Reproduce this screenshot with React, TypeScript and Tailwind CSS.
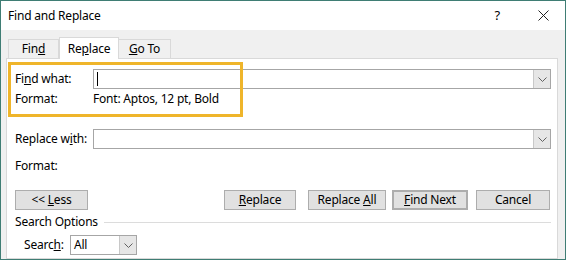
import React from 'react'

const font = { fontFamily: '"Noto Sans", "Open Sans", sans-serif' }

function Btn({ children, className = '' }: { children: React.ReactNode; className?: string }) {
  return (
    <div
      className={`flex h-[20px] items-center justify-center border border-[#adadad] bg-[#e1e1e1] text-[12px] text-black ${className}`}
    >
      <span>{children}</span>
    </div>
  )
}

function Combo({ width, children }: { width: string; children?: React.ReactNode }) {
  return (
    <div className={`flex h-[20px] border border-[#a6a6a6] bg-white ${width}`}>
      <div className="flex flex-1 items-center pl-[3px] text-[12px]">{children}</div>
      <div className="flex w-[17px] items-center justify-center border-l border-[#c8c8c8] bg-[#e6e6e6]">
        <svg width="9" height="5" viewBox="0 0 9 5" fill="none">
          <path d="M0.5 0.5 L4.5 4.5 L8.5 0.5" stroke="#606060" strokeWidth="1" />
        </svg>
      </div>
    </div>
  )
}

export default function App() {
  return (
    <div
      style={font}
      className="flex h-[260px] w-[566px] flex-col overflow-hidden border border-[#3f7d74] bg-[#f0f0f0] text-[12px] leading-none tracking-[-0.2px] text-black"
    >
      {/* title bar */}
      <div className="flex h-[29px] shrink-0 items-center bg-white pl-[7px]">
        <span className="text-[12px]">Find and Replace</span>
        <span className="ml-auto mr-[38px] text-[13px]">?</span>
        <svg className="mr-[16px]" width="11" height="11" viewBox="0 0 11 11">
          <path d="M0.5 0.5 L10.5 10.5 M10.5 0.5 L0.5 10.5" stroke="#222" strokeWidth="1" />
        </svg>
      </div>

      {/* tabs */}
      <div className="mt-[6px] flex h-[22px] shrink-0 items-end pl-[7px]">
        <div className="flex h-[19px] w-[51px] items-center justify-center border border-b-0 border-[#d9d9d9] bg-[#f0f0f0]">
          <span>
            Fin<u>d</u>
          </span>
        </div>
        <div className="relative z-10 -mb-px flex h-[22px] w-[60px] items-center justify-center border border-b-0 border-[#d9d9d9] bg-white">
          <span>
            Re<u>p</u>lace
          </span>
        </div>
        <div className="flex h-[19px] w-[52px] items-center justify-center border border-b-0 border-l-0 border-[#d9d9d9] bg-[#f0f0f0]">
          <span>
            <u>G</u>o To
          </span>
        </div>
      </div>

      {/* panel */}
      <div className="relative ml-[5px] flex w-[552px] flex-1 flex-col border border-[#d9d9d9] bg-white pl-[8px]">
        <div className="pointer-events-none absolute left-[1px] top-[3px] h-[55px] w-[235px] border-[3px] border-[#efb52a]" />

        <div className="mt-[10px] flex h-[20px] items-center">
          <span className="w-[78px]">
            Fi<u>n</u>d what:
          </span>
          <Combo width="w-[458px]">
            <span className="h-[14px] w-px bg-black" />
          </Combo>
        </div>
        <div className="flex h-[20px] items-center">
          <span className="w-[78px]">Format:</span>
          <span>Font: Aptos, 12 pt, Bold</span>
        </div>

        <div className="mt-[20px] flex h-[20px] items-center">
          <span className="w-[78px]">
            Replace w<u>i</u>th:
          </span>
          <Combo width="w-[458px]" />
        </div>
        <div className="mt-[7px] flex h-[20px] items-center">
          <span className="w-[78px]">Format:</span>
        </div>

        <div className="mt-[14px] flex items-center">
          <Btn className="w-[73px]">
            &lt;&lt; <u>L</u>ess
          </Btn>
          <Btn className="ml-[136px] w-[72px]">
            <u>R</u>eplace
          </Btn>
          <Btn className="ml-[12px] w-[78px]">
            Replace <u>A</u>ll
          </Btn>
          <Btn className="ml-[6px] w-[76px] border-2 border-[#0078d7]">
            <u>F</u>ind Next
          </Btn>
          <Btn className="ml-[8px] w-[74px]">Cancel</Btn>
        </div>

        <div className="mt-[3px] flex h-[18px] items-center">
          <span>Search Options</span>
          <div className="ml-[6px] mr-[6px] h-px flex-1 bg-[#dcdcdc]" />
        </div>

        <div className="mt-[4px] flex h-[20px] items-center pl-[9px]">
          <span className="w-[46px]">
            Searc<u>h</u>:
          </span>
          <Combo width="w-[67px]">All</Combo>
        </div>
      </div>
    </div>
  )
}
